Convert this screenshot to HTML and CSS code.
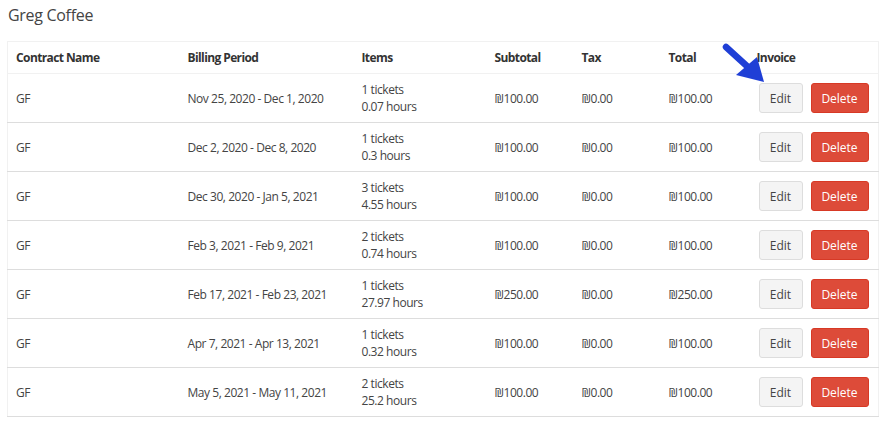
FILE: index.html
```html
<!DOCTYPE html>
<html lang="en">
<head>
  <meta charset="UTF-8">
  <link rel="stylesheet" href="styles.css">
</head>
<body>
  <h3 class="title">Greg Coffee</h3>
  <div class="box">
    <table class="invoices">
      <colgroup>
        <col style="width:172px"><col style="width:174px"><col style="width:133px">
        <col style="width:87px"><col style="width:87px"><col style="width:88px"><col>
      </colgroup>
      <thead>
        <tr>
          <th>Contract Name</th><th>Billing Period</th><th>Items</th>
          <th>Subtotal</th><th>Tax</th><th>Total</th><th>Invoice</th>
        </tr>
      </thead>
      <tbody>
        <tr>
          <td>GF</td><td>Nov 25, 2020 - Dec 1, 2020</td>
          <td>1 tickets<br>0.07 hours</td>
          <td>₪100.00</td><td>₪0.00</td><td>₪100.00</td>
          <td><button class="btn edit">Edit</button><button class="btn del">Delete</button></td>
        </tr>
        <tr>
          <td>GF</td><td>Dec 2, 2020 - Dec 8, 2020</td>
          <td>1 tickets<br>0.3 hours</td>
          <td>₪100.00</td><td>₪0.00</td><td>₪100.00</td>
          <td><button class="btn edit">Edit</button><button class="btn del">Delete</button></td>
        </tr>
        <tr>
          <td>GF</td><td>Dec 30, 2020 - Jan 5, 2021</td>
          <td>3 tickets<br>4.55 hours</td>
          <td>₪100.00</td><td>₪0.00</td><td>₪100.00</td>
          <td><button class="btn edit">Edit</button><button class="btn del">Delete</button></td>
        </tr>
        <tr>
          <td>GF</td><td>Feb 3, 2021 - Feb 9, 2021</td>
          <td>2 tickets<br>0.74 hours</td>
          <td>₪100.00</td><td>₪0.00</td><td>₪100.00</td>
          <td><button class="btn edit">Edit</button><button class="btn del">Delete</button></td>
        </tr>
        <tr>
          <td>GF</td><td>Feb 17, 2021 - Feb 23, 2021</td>
          <td>1 tickets<br>27.97 hours</td>
          <td>₪250.00</td><td>₪0.00</td><td>₪250.00</td>
          <td><button class="btn edit">Edit</button><button class="btn del">Delete</button></td>
        </tr>
        <tr>
          <td>GF</td><td>Apr 7, 2021 - Apr 13, 2021</td>
          <td>1 tickets<br>0.32 hours</td>
          <td>₪100.00</td><td>₪0.00</td><td>₪100.00</td>
          <td><button class="btn edit">Edit</button><button class="btn del">Delete</button></td>
        </tr>
        <tr>
          <td>GF</td><td>May 5, 2021 - May 11, 2021</td>
          <td>2 tickets<br>25.2 hours</td>
          <td>₪100.00</td><td>₪0.00</td><td>₪100.00</td>
          <td><button class="btn edit">Edit</button><button class="btn del">Delete</button></td>
        </tr>
      </tbody>
    </table>
    <svg class="arrow" width="50" height="50" viewBox="0 0 50 50">
      <line x1="5" y1="5" x2="28" y2="26" stroke="#1f3fd6" stroke-width="6.5" stroke-linecap="round"/>
      <polygon points="15,33 36,15 43,40" fill="#1f3fd6"/>
    </svg>
  </div>
</body>
</html>
```

FILE: styles.css
```css
body {
  margin: 0;
  padding: 0 7px;
  font-family: "Open Sans", sans-serif;
  color: #333;
  background: #fff;
}

.title {
  margin: 0;
  padding: 4px 0 0 1px;
  height: 37px;
  font-size: 16px;
  font-weight: normal;
  letter-spacing: -0.3px;
  color: #444;
}

.box {
  position: relative;
  width: 872px;
}

.invoices {
  width: 100%;
  table-layout: fixed;
  border-collapse: collapse;
  border: 1px solid #f1f1f1;
  font-size: 12px;
  letter-spacing: -0.45px;
  white-space: nowrap;
}

.invoices th {
  text-align: left;
  font-weight: bold;
  height: 31px;
  padding: 0 8px;
  border-bottom: 1px solid #f1f1f1;
  letter-spacing: -0.6px;
  color: #333;
}

.invoices td {
  height: 48px;
  padding: 0 8px;
  line-height: 17px;
  border-top: 1px solid #ddd;
  color: #444;
}

.invoices tbody tr:last-child td {
  border-bottom: 1px solid #ddd;
}

.btn {
  font-family: inherit;
  font-size: 12px;
  height: 30px;
  padding: 0;
  border-radius: 3px;
  cursor: pointer;
  vertical-align: middle;
}

.edit {
  width: 44px;
  margin-left: 2px;
  background: #f4f4f4;
  border: 1px solid #ddd;
  color: #444;
}

.del {
  width: 58px;
  margin-left: 8px;
  background: #dd4b39;
  border: 1px solid #d73925;
  color: #fff;
}

.arrow {
  position: absolute;
  left: 714px;
  top: 1px;
}
```
